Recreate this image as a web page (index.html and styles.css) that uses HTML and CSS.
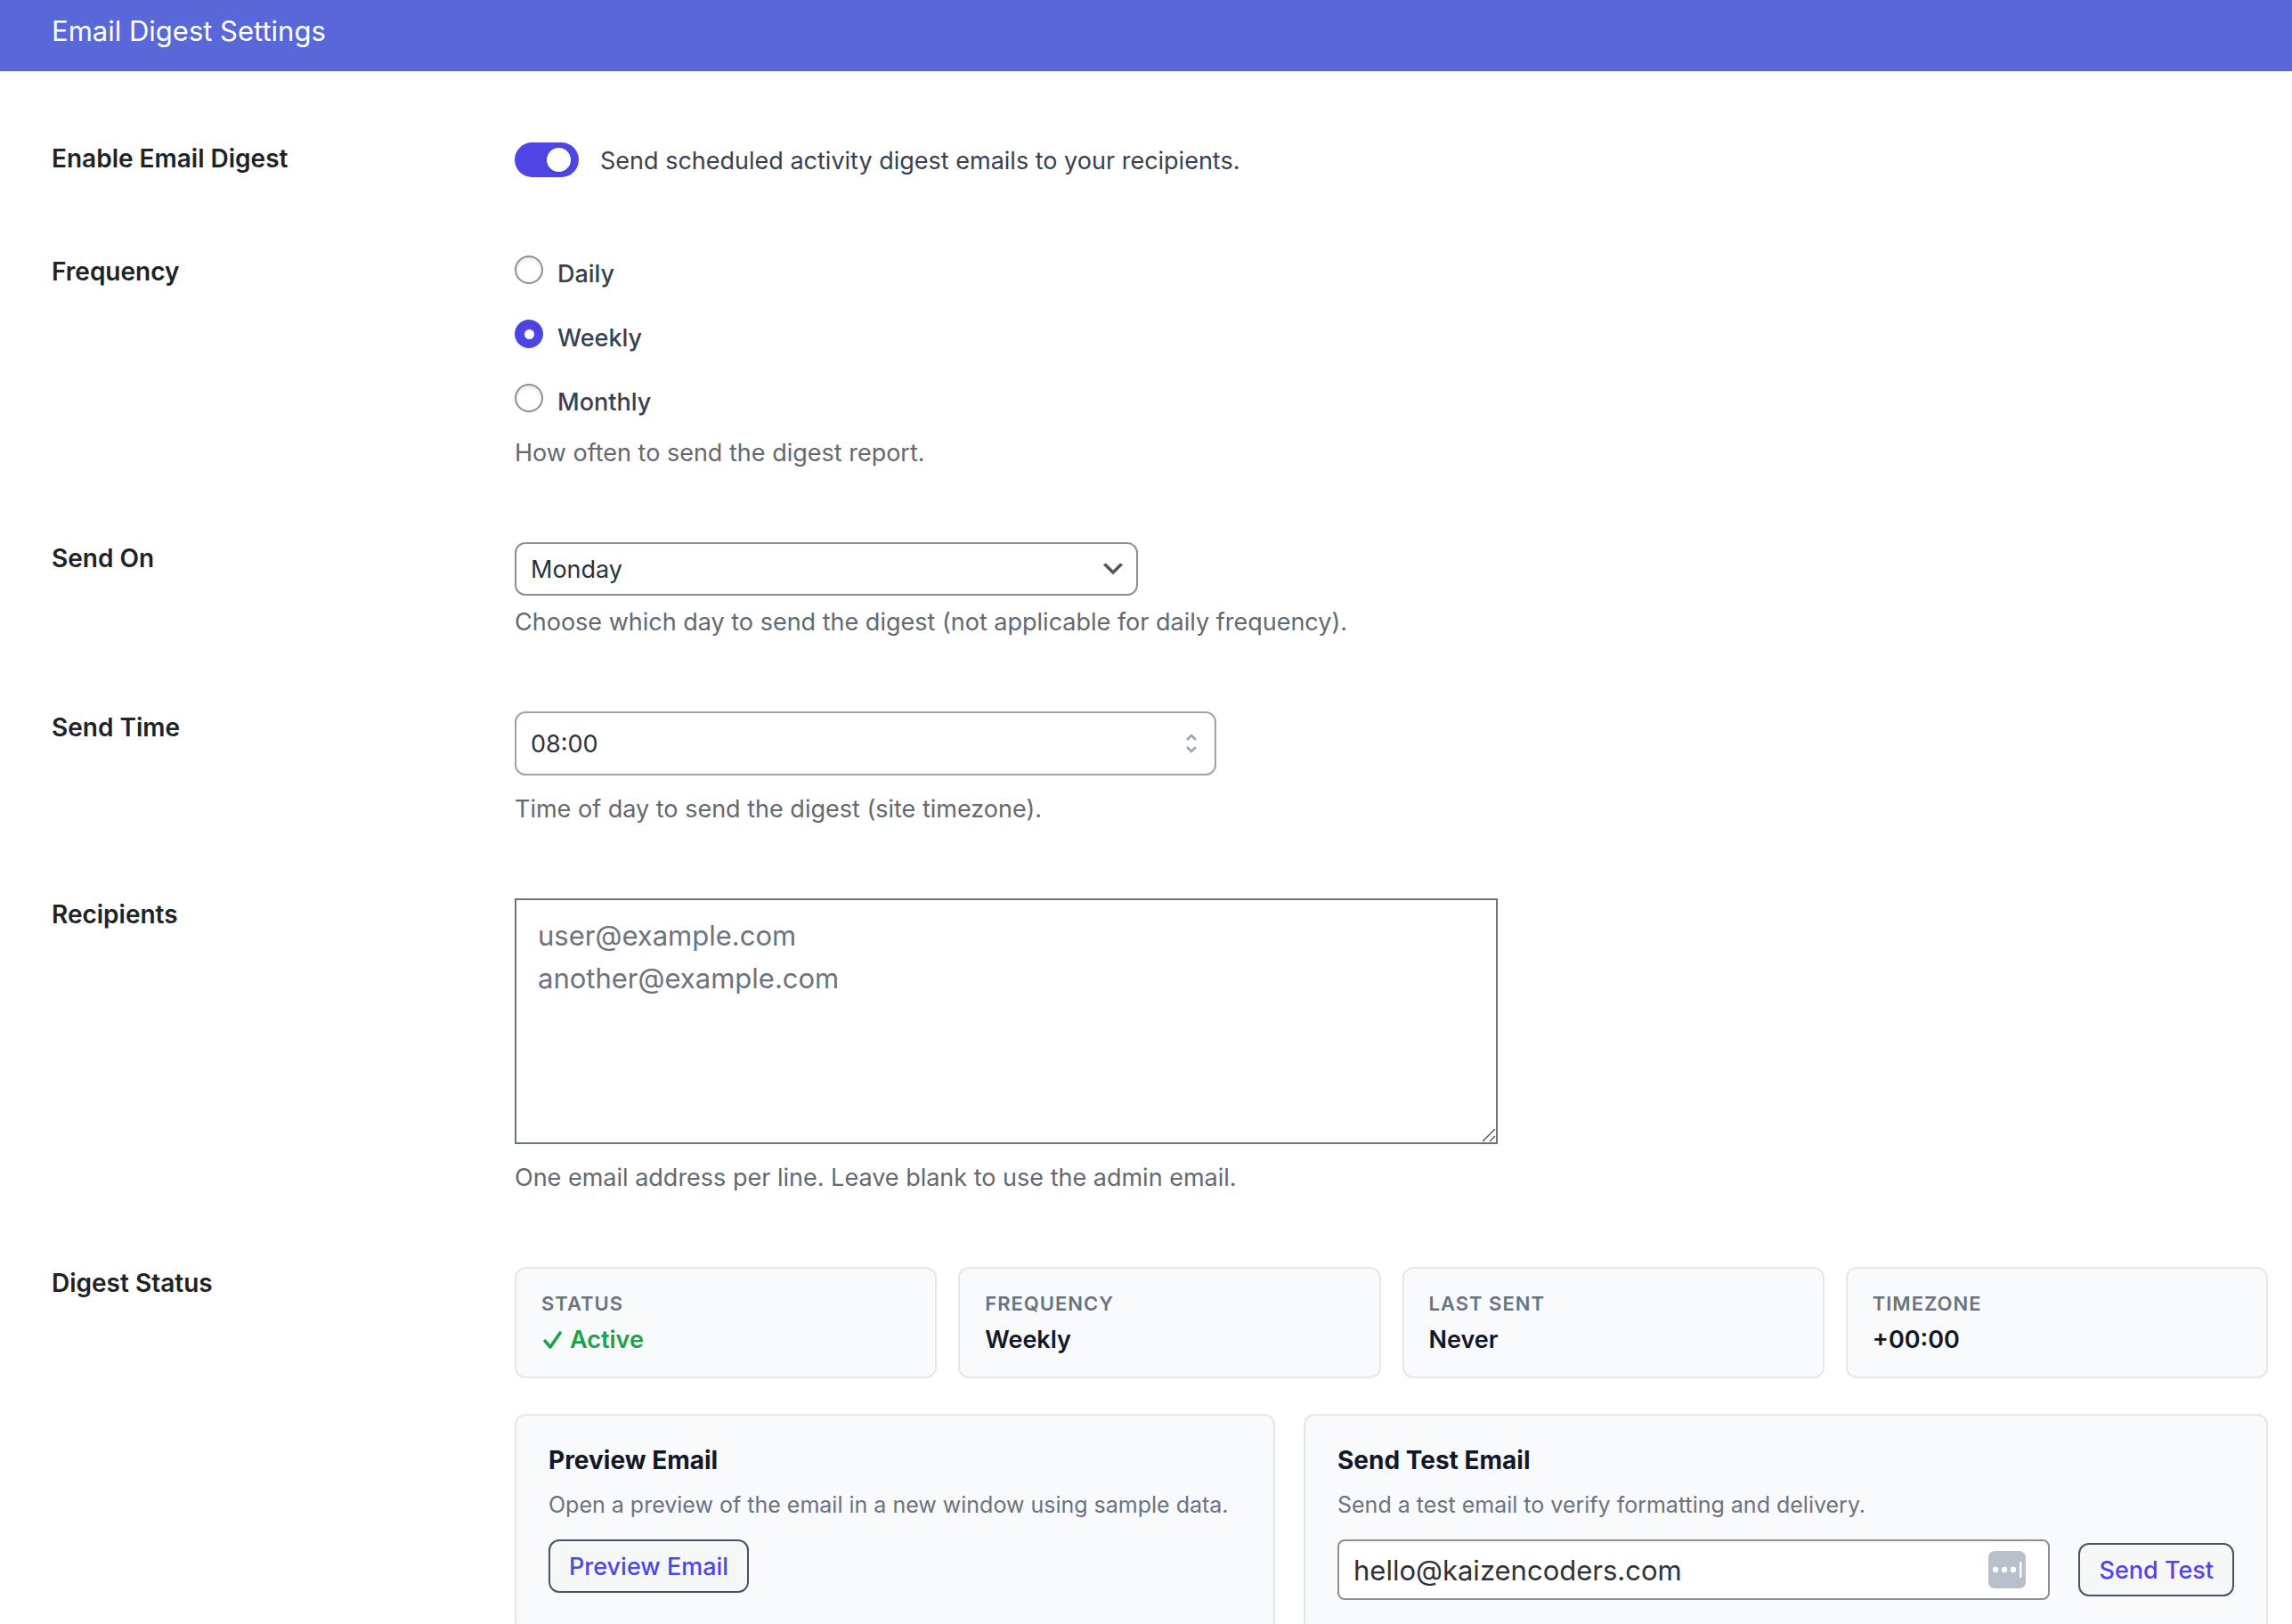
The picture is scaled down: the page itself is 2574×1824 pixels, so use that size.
FILE: index.html
```html
<!DOCTYPE html>
<html lang="en">
<head>
  <meta charset="UTF-8">
  <meta name="viewport" content="width=device-width, initial-scale=1.0">
  <title>Email Digest Settings</title>
  <link rel="stylesheet" href="styles.css">
</head>
<body>
  <header class="page-header">
    <h1>Email Digest Settings</h1>
  </header>

  <main class="settings">
    <div class="row">
      <label class="row-label" for="enableDigest">Enable Email Digest</label>
      <div class="field">
        <div class="switch-line">
          <input type="checkbox" class="switch" id="enableDigest" checked>
          <label for="enableDigest">Send scheduled activity digest emails to your recipients.</label>
        </div>
      </div>
    </div>

    <div class="row">
      <span class="row-label" id="frequencyLabel">Frequency</span>
      <div class="field">
        <div class="radio-list" role="radiogroup" aria-labelledby="frequencyLabel">
          <label><input type="radio" name="frequency" value="daily"> Daily</label>
          <label><input type="radio" name="frequency" value="weekly" checked> Weekly</label>
          <label><input type="radio" name="frequency" value="monthly"> Monthly</label>
        </div>
        <p class="description description-radio">How often to send the digest report.</p>
      </div>
    </div>

    <div class="row">
      <label class="row-label" for="sendOn">Send On</label>
      <div class="field">
        <select class="select" id="sendOn">
          <option>Monday</option>
          <option>Tuesday</option>
          <option>Wednesday</option>
          <option>Thursday</option>
          <option>Friday</option>
          <option>Saturday</option>
          <option>Sunday</option>
        </select>
        <p class="description description-tight">Choose which day to send the digest (not applicable for daily frequency).</p>
      </div>
    </div>

    <div class="row">
      <label class="row-label" for="sendTime">Send Time</label>
      <div class="field">
        <input type="text" class="time-input" id="sendTime" value="08:00">
        <p class="description">Time of day to send the digest (site timezone).</p>
      </div>
    </div>

    <div class="row">
      <label class="row-label" for="recipients">Recipients</label>
      <div class="field">
        <textarea class="recipients" id="recipients" placeholder="user@example.com&#10;another@example.com"></textarea>
        <p class="description">One email address per line. Leave blank to use the admin email.</p>
      </div>
    </div>

    <div class="row">
      <span class="row-label">Digest Status</span>
      <div class="field">
        <div class="stats">
          <div class="stat">
            <div class="stat-name">Status</div>
            <div class="stat-value active">
              <svg class="check" viewBox="0 0 24 24" aria-hidden="true"><path d="M4 13l6 7L21 4"/></svg>
              Active
            </div>
          </div>
          <div class="stat">
            <div class="stat-name">Frequency</div>
            <div class="stat-value">Weekly</div>
          </div>
          <div class="stat">
            <div class="stat-name">Last Sent</div>
            <div class="stat-value">Never</div>
          </div>
          <div class="stat">
            <div class="stat-name">Timezone</div>
            <div class="stat-value">+00:00</div>
          </div>
        </div>

        <div class="panels">
          <section class="panel">
            <h2>Preview Email</h2>
            <p>Open a preview of the email in a new window using sample data.</p>
            <button type="button" class="button">Preview Email</button>
          </section>
          <section class="panel">
            <h2>Send Test Email</h2>
            <p>Send a test email to verify formatting and delivery.</p>
            <div class="test-form">
              <div class="email-box">
                <input type="email" value="hello@kaizencoders.com" aria-label="Test email address">
                <svg class="autofill" viewBox="0 0 42 42" aria-hidden="true">
                  <rect width="42" height="42" rx="7" fill="#b9c0cb"/>
                  <circle cx="8" cy="21" r="3.2"/>
                  <circle cx="18" cy="21" r="3.2"/>
                  <circle cx="28" cy="21" r="3.2"/>
                  <rect x="35" y="12" width="2.4" height="18" rx="1"/>
                </svg>
              </div>
              <button type="button" class="button">Send Test</button>
            </div>
          </section>
        </div>
      </div>
    </div>
  </main>
</body>
</html>
```
FILE: styles.css
```css
* {
  margin: 0;
  padding: 0;
  box-sizing: border-box;
}
html {
  scrollbar-width: none;
}
body {
  background: #fff;
  color: #3c434a;
  font-family: Inter, "Liberation Sans", sans-serif;
  font-size: 27px;
  line-height: 42px;
}
input, select, textarea, button {
  font-family: inherit;
  font-size: inherit;
}
.page-header {
  background: #5a67d8;
  color: #fff;
  padding: 16px 58px 26px;
}
.page-header h1 {
  font-size: 31px;
  font-weight: 400;
  line-height: 38px;
}
.settings {
  display: flex;
  flex-direction: column;
  gap: 79px;
  padding: 80px 27px 0 58px;
}
.row {
  display: grid;
  grid-template-columns: 520px minmax(0, 1fr);
  min-height: 48px;
}
.row-label {
  color: #1d2327;
  font-size: 28px;
  font-weight: 600;
  line-height: 37px;
}
.description {
  color: #646970;
  margin-top: 17px;
}
.description-tight {
  margin-top: 9px;
}
.description-radio {
  margin-top: 15px;
}

/* enable switch */
.switch-line {
  display: flex;
  gap: 24px;
  color: #374151;
}
.switch {
  appearance: none;
  display: flex;
  justify-content: flex-end;
  width: 72px;
  height: 39px;
  padding: 6px 9px;
  border-radius: 20px;
  background: #4f46e5;
}
.switch::before {
  content: "";
  width: 27px;
  height: 27px;
  border-radius: 50%;
  background: #fff;
  box-shadow: 0 1px 4px rgba(0, 0, 0, 0.15);
}
.switch:not(:checked) {
  justify-content: flex-start;
  background: #9ca3af;
}

.radio-list {
  display: flex;
  flex-direction: column;
  gap: 30px;
}
.radio-list label {
  display: flex;
  gap: 16px;
  align-self: flex-start;
  color: #374151;
  font-weight: 500;
}
.radio-list input {
  appearance: none;
  display: grid;
  place-items: center;
  width: 32px;
  height: 32px;
  border: 2px solid #8c8f94;
  border-radius: 50%;
  background: #fff;
  box-shadow: inset 0 2px 4px rgba(0, 0, 0, 0.1);
}
.radio-list input:checked {
  border-color: #4f46e5;
  background: #4f46e5;
}
.radio-list input:checked::before {
  content: "";
  width: 11px;
  height: 11px;
  border-radius: 50%;
  background: #fff;
}

/* text fields */
.select, .time-input, .recipients {
  display: block;
  width: 100%;
  border: 2px solid #8c8f94;
  background-color: #fff;
  background-repeat: no-repeat;
}
.select {
  appearance: none;
  max-width: 700px;
  height: 60px;
  padding: 0 48px 0 16px;
  border-radius: 12px;
  color: #2c3338;
  background-image: url("data:image/svg+xml,%3Csvg xmlns='http://www.w3.org/2000/svg' width='32' height='32' viewBox='0 0 20 20'%3E%3Cpath d='M5 6l5 5 5-5 2 1-7 7-7-7 2-1z' fill='%23555'/%3E%3C/svg%3E");
  background-position: right 10px center;
}
.time-input {
  max-width: 788px;
  height: 72px;
  padding: 0 48px 0 16px;
  border-color: #9ca3af;
  border-radius: 12px;
  color: #2c3338;
  background-image: url("data:image/svg+xml,%3Csvg xmlns='http://www.w3.org/2000/svg' width='14' height='24' viewBox='0 0 14 24' fill='none' stroke='%239ca3af' stroke-width='2.5'%3E%3Cpath d='M2 8l5-5 5 5M2 16l5 5 5-5'/%3E%3C/svg%3E");
  background-position: right 19px center;
}
.recipients {
  max-width: 1104px;
  height: 276px;
  padding: 16px 24px;
  border-color: #6b7280;
  font-size: 31px;
  line-height: 48px;
}
.recipients::placeholder {
  color: #6b7280;
}
.recipients::-webkit-resizer {
  background: url("data:image/svg+xml,%3Csvg xmlns='http://www.w3.org/2000/svg' width='15' height='15' viewBox='0 0 15 15' stroke='%23555' stroke-width='1.4'%3E%3Cpath d='M0 14L14 0M8 14l6-6'/%3E%3C/svg%3E") no-repeat;
}

/* digest status */
.stats {
  display: grid;
  grid-template-columns: repeat(4, 1fr);
  gap: 24px;
}
.stat {
  padding: 23px 28px 20px;
  border: 2px solid #e5e7eb;
  border-radius: 12px;
  background: #f9fafb;
}
.stat-name {
  color: #6b7280;
  font-size: 22px;
  font-weight: 600;
  letter-spacing: 1px;
  line-height: 32px;
  text-transform: uppercase;
}
.stat-value {
  margin-top: 4px;
  color: #111827;
  font-weight: 600;
}
.active {
  display: flex;
  align-items: center;
  gap: 8px;
  color: #16a34a;
}
.check {
  width: 24px;
  height: 24px;
  fill: none;
  stroke: currentColor;
  stroke-width: 3.5;
  stroke-linecap: round;
  stroke-linejoin: round;
}

.panels {
  display: grid;
  grid-template-columns: 854fr 1083fr;
  gap: 32px;
  margin-top: 40px;
}
.panel {
  padding: 36px 36px 34px;
  border: 2px solid #e5e7eb;
  border-radius: 12px;
  background: #f9fafb;
}
.panel h2 {
  color: #111827;
  font-size: 28px;
  font-weight: 700;
  line-height: 28px;
}
.panel p {
  margin: 17px 0 19px;
  color: #6b7280;
  font-size: 25px;
  line-height: 39px;
}
.button {
  height: 60px;
  padding: 0 21px;
  border: 2px solid #475569;
  border-radius: 12px;
  background: #f6f7f7;
  color: #4f46e5;
  font-weight: 500;
  white-space: nowrap;
}
.test-form {
  display: flex;
  align-items: center;
  gap: 32px;
}
.email-box {
  position: relative;
  flex: 1;
}
.email-box input {
  display: block;
  width: 100%;
  height: 68px;
  padding: 0 80px 0 16px;
  border: 2px solid #8c8f94;
  border-radius: 8px;
  background: #fff;
  color: #2c3338;
  font-size: 31px;
}
.autofill {
  position: absolute;
  top: 13px;
  right: 27px;
  width: 42px;
  height: 42px;
  fill: #fff;
}
```
